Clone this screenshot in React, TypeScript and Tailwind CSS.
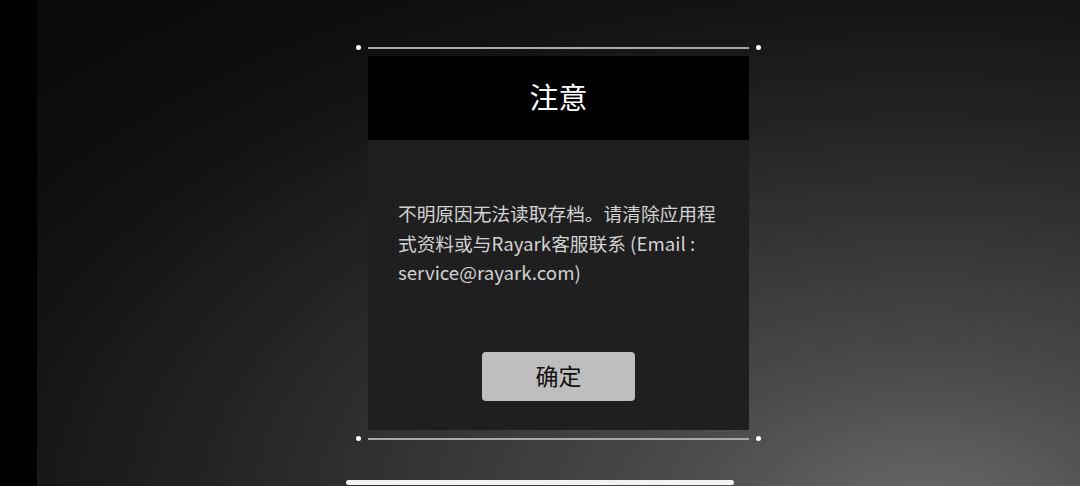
const FONT = '"Noto Sans CJK SC", "Noto Sans", sans-serif';

// thin rule with a dot at each end, sits just outside the dialog edges
const Rule = () => (
  <div className="flex items-center gap-[7px]">
    <span className="w-[5px] h-[5px] rounded-full bg-white" />
    <span className="w-[381px] h-[2px] bg-[#a8a8a8]" />
    <span className="w-[5px] h-[5px] rounded-full bg-white" />
  </div>
);

export default function App() {
  return (
    <div
      className="relative flex w-[1080px] h-[486px] overflow-hidden bg-black"
      style={{ fontFamily: FONT }}
    >
      <div className="w-[37px] shrink-0 bg-black" />
      <div className="flex-1 flex flex-col items-center justify-center gap-[6px] bg-[radial-gradient(ellipse_115%_135%_at_85%_105%,#686868_0%,#4a4a4a_22%,#373737_40%,#232323_60%,#121212_80%,#0a0a0a_100%)]">
        <Rule />
        <div className="w-[381px] h-[374px] flex flex-col">
          <div className="h-[84px] bg-black flex items-center justify-center pb-[4px]">
            <h1 className="text-[29px] leading-none text-white">注意</h1>
          </div>
          <div className="flex-1 bg-[#1f1f1f] flex flex-col px-[30px] pt-[58px]">
            <p className="text-[18.7px] leading-[29.5px] text-[#d2d2d2]">
              不明原因无法读取存档。请清除应用程式资料或与Rayark客服联系 (Email : service@rayark.com)
            </p>
            <div className="mt-auto mb-[29px] flex justify-center">
              <button className="w-[153px] h-[49px] rounded-[4px] bg-[#bebebe] text-[23px] text-[#111] leading-none pb-[3px]">
                确定
              </button>
            </div>
          </div>
        </div>
        <Rule />
      </div>
      <div className="absolute left-[346px] bottom-[1px] w-[388px] h-[5px] rounded-full bg-[#f2f2f2]" />
    </div>
  );
}
